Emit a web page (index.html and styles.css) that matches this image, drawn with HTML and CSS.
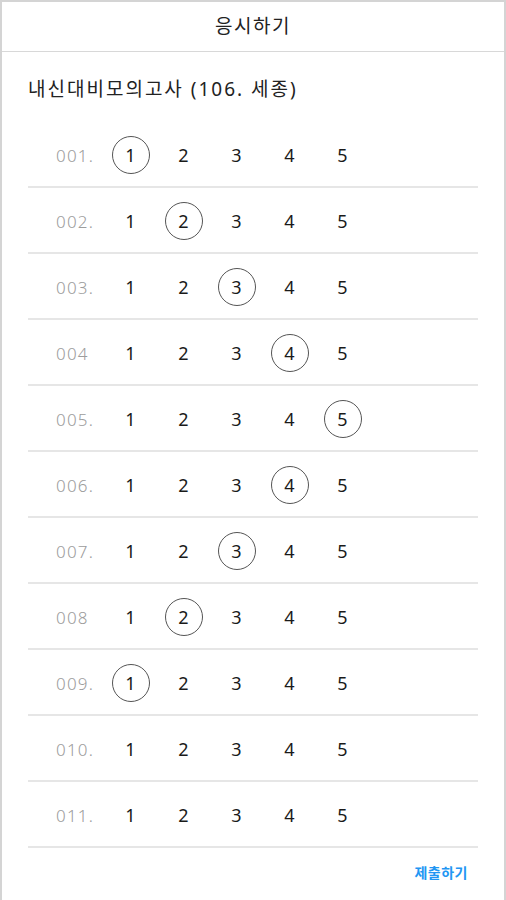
FILE: index.html
```html
<!DOCTYPE html>
<html lang="ko">
<head>
  <meta charset="UTF-8" />
  <title>응시하기</title>
  <link rel="stylesheet" href="styles.css">
</head>
<body>
  <div class="dialog">
    <div class="header">응시하기</div>
    <div class="exam-title">내신대비모의고사 (106. 세종)</div>

    <div class="rows">
      <div class="row"><span class="num">001.</span><span class="opt picked">1</span><span class="opt">2</span><span class="opt">3</span><span class="opt">4</span><span class="opt">5</span></div>
      <div class="row"><span class="num">002.</span><span class="opt">1</span><span class="opt picked">2</span><span class="opt">3</span><span class="opt">4</span><span class="opt">5</span></div>
      <div class="row"><span class="num">003.</span><span class="opt">1</span><span class="opt">2</span><span class="opt picked">3</span><span class="opt">4</span><span class="opt">5</span></div>
      <div class="row"><span class="num">004</span><span class="opt">1</span><span class="opt">2</span><span class="opt">3</span><span class="opt picked">4</span><span class="opt">5</span></div>
      <div class="row"><span class="num">005.</span><span class="opt">1</span><span class="opt">2</span><span class="opt">3</span><span class="opt">4</span><span class="opt picked">5</span></div>
      <div class="row"><span class="num">006.</span><span class="opt">1</span><span class="opt">2</span><span class="opt">3</span><span class="opt picked">4</span><span class="opt">5</span></div>
      <div class="row"><span class="num">007.</span><span class="opt">1</span><span class="opt">2</span><span class="opt picked">3</span><span class="opt">4</span><span class="opt">5</span></div>
      <div class="row"><span class="num">008</span><span class="opt">1</span><span class="opt picked">2</span><span class="opt">3</span><span class="opt">4</span><span class="opt">5</span></div>
      <div class="row"><span class="num">009.</span><span class="opt picked">1</span><span class="opt">2</span><span class="opt">3</span><span class="opt">4</span><span class="opt">5</span></div>
      <div class="row"><span class="num">010.</span><span class="opt">1</span><span class="opt">2</span><span class="opt">3</span><span class="opt">4</span><span class="opt">5</span></div>
      <div class="row"><span class="num">011.</span><span class="opt">1</span><span class="opt">2</span><span class="opt">3</span><span class="opt">4</span><span class="opt">5</span></div>
    </div>

    <div class="footer"><a class="submit">제출하기</a></div>
  </div>
</body>
</html>
```

FILE: styles.css
```css
body { margin: 0; font-family: "Noto Sans", "Noto Sans CJK KR", sans-serif; color: #222; background: #fff; }
.dialog { width: 506px; height: 900px; box-sizing: border-box; border: 2px solid #d4d4d4; border-bottom: 0; }
.header { height: 49px; line-height: 49px; text-align: center; font-size: 19px; letter-spacing: 1.5px; border-bottom: 1px solid #d8d8d8; }
.exam-title { padding: 25px 26px 21px; line-height: 24px; font-size: 19px; letter-spacing: 2px; }
.rows { margin: 0 26px; }
.row { display: flex; align-items: center; height: 66px; box-sizing: border-box; border-bottom: 2px solid #e6e6e6; padding: 2px 0 0 28px; }
.num { width: 48px; font-size: 17px; letter-spacing: 1.2px; color: #9c9c9c; font-weight: 300; }
.opt { width: 53px; display: flex; justify-content: center; align-items: center; font-size: 18px; color: #1a1a1a; }
.picked { position: relative; }
.picked::after { content: ""; position: absolute; width: 36px; height: 36px; border: 1px solid #555; border-radius: 50%; left: 50%; top: 50%; transform: translate(-50%, -50%); }
.footer { display: flex; justify-content: flex-end; padding: 14px 36px 0; }
.submit { color: #2196f3; font-size: 14px; font-weight: bold; line-height: 22px; letter-spacing: 0.5px; }
```
